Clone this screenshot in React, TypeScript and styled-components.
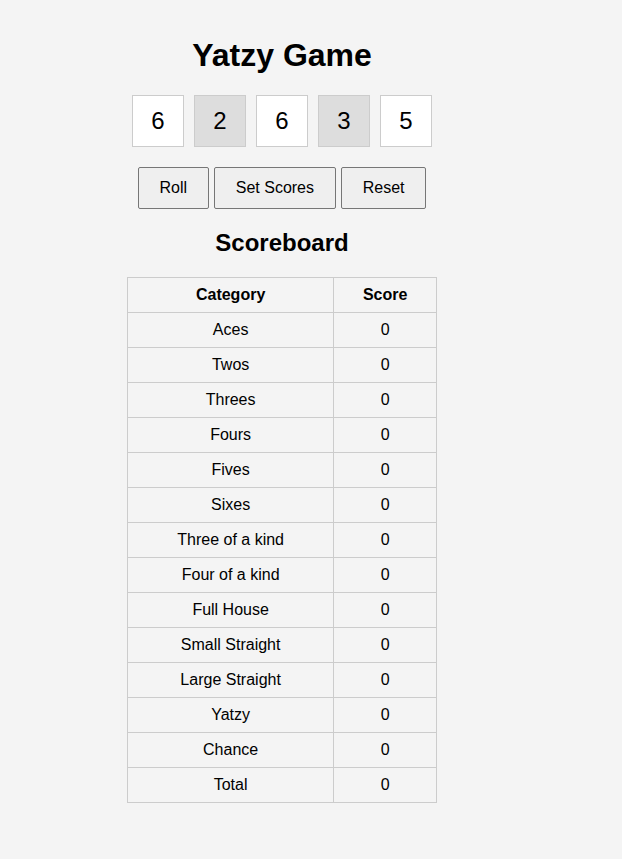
import React from "react";
import styled, { createGlobalStyle } from "styled-components";

const Global = createGlobalStyle`
  html, body { margin: 0; padding: 0; background: #f4f4f4; }
  body { font-family: "Liberation Sans", Arial, sans-serif; color: #000; }
`;

const Page = styled.div`
  width: 564px;
  padding-top: 37px;
  display: flex;
  flex-direction: column;
  align-items: center;
`;

const Title = styled.h1`
  margin: 0;
  font-size: 32px;
  line-height: 37px;
  font-weight: bold;
`;

const DiceRow = styled.div`
  display: flex;
  gap: 10px;
  margin-top: 21px;
`;

const Die = styled.div<{ $held?: boolean }>`
  width: 52px;
  height: 52px;
  box-sizing: border-box;
  border: 1px solid #ccc;
  background: ${(p) => (p.$held ? "#dddddd" : "#ffffff")};
  display: flex;
  align-items: center;
  justify-content: center;
  font-size: 24px;
`;

const ButtonRow = styled.div`
  display: flex;
  gap: 5.7px;
  margin-top: 20px;
`;

const Button = styled.button`
  height: 42px;
  box-sizing: border-box;
  padding: 0 20.5px;
  border: 1px solid #767676;
  border-radius: 2px;
  background: #efefef;
  font-family: "Liberation Sans", Arial, sans-serif;
  font-size: 16px;
  color: #000;
`;

const Subtitle = styled.h2`
  margin: 20px 0 0;
  font-size: 24px;
  line-height: 28px;
  font-weight: bold;
`;

const Table = styled.table`
  margin-top: 20px;
  border-collapse: collapse;
  width: 310px;
  font-size: 16px;
`;

const Cell = styled.td<{ $w?: number }>`
  border: 1px solid #ccc;
  height: 35px;
  box-sizing: border-box;
  padding: 0 8px;
  text-align: center;
  ${(p) => (p.$w ? `width: ${p.$w}px;` : "")}
`;

const Head = styled(Cell).attrs({ as: "th" })`
  font-weight: bold;
`;

const dice = [
  { v: 6, held: false },
  { v: 2, held: true },
  { v: 6, held: false },
  { v: 3, held: true },
  { v: 5, held: false },
];

const categories = [
  "Aces",
  "Twos",
  "Threes",
  "Fours",
  "Fives",
  "Sixes",
  "Three of a kind",
  "Four of a kind",
  "Full House",
  "Small Straight",
  "Large Straight",
  "Yatzy",
  "Chance",
  "Total",
];

export default function App() {
  return (
    <>
      <Global />
      <Page>
        <Title>Yatzy Game</Title>
        <DiceRow>
          {dice.map((d, i) => (
            <Die key={i} $held={d.held}>
              {d.v}
            </Die>
          ))}
        </DiceRow>
        <ButtonRow>
          <Button>Roll</Button>
          <Button>Set Scores</Button>
          <Button>Reset</Button>
        </ButtonRow>
        <Subtitle>Scoreboard</Subtitle>
        <Table>
          <thead>
            <tr>
              <Head $w={207}>Category</Head>
              <Head $w={103}>Score</Head>
            </tr>
          </thead>
          <tbody>
            {categories.map((c) => (
              <tr key={c}>
                <Cell>{c}</Cell>
                <Cell>0</Cell>
              </tr>
            ))}
          </tbody>
        </Table>
      </Page>
    </>
  );
}
